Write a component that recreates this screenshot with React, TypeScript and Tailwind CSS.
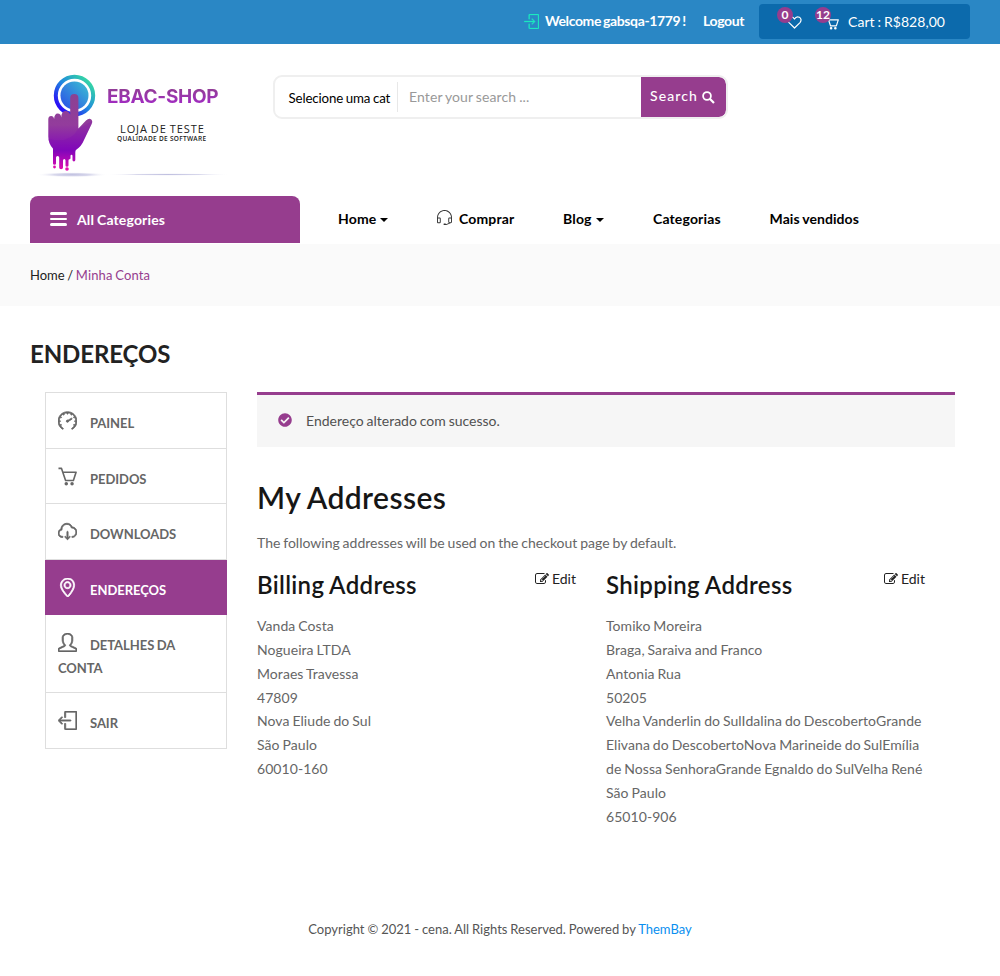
import type { ReactNode } from "react";
import { SlLogin, SlLogout, SlSpeedometer, SlCloudDownload, SlLocationPin, SlUser, SlEarphonesAlt } from "react-icons/sl";
import { FaCheckCircle } from "react-icons/fa";

function EditIcon() {
  return (
    <svg viewBox="0 0 1792 1792" className="size-[14px]" fill="currentColor">
      <path d="M888 1184l116-116-152-152-116 116v56h96v96h56zM1328 464q-16-16-33 1l-350 350q-17 17-1 33t33-1l350-350q17-17 1-33zm80 594v190q0 119-84.5 203.5t-203.5 84.5h-832q-119 0-203.5-84.5t-84.5-203.5v-832q0-119 84.5-203.5t203.5-84.5h832q63 0 117 25 15 7 18 23 3 17-9 29l-49 49q-14 14-32 8-23-6-45-6h-832q-66 0-113 47t-47 113v832q0 66 47 113t113 47h832q66 0 113-47t47-113v-126q0-13 9-22l64-64q15-15 35-7t20 29zm-96-738l288 288-672 672h-288v-288zm444 132l-92 92-288-288 92-92q28-28 68-28t68 28l152 152q28 28 28 68t-28 68z" />
    </svg>
  );
}

function CartIcon({ className }: { className?: string; strokeWidth?: string }) {
  return (
    <svg viewBox="0 0 20 20" className={className} fill="none" stroke="currentColor" strokeWidth="1.700">
      <path d="M.5 1.500h3.200L8 14.200h8.200L19 5.500H5" strokeLinejoin="round" />
      <circle cx="8.700" cy="17.600" r="1" fill="currentColor" />
      <circle cx="14.800" cy="17.600" r="1" fill="currentColor" />
    </svg>
  );
}

function HeartIcon() {
  return (
    <svg viewBox="0 0 15 13" className="h-[13px] w-[15px]" fill="none" stroke="currentColor" strokeWidth="1.200">
      <path d="M7.500 12 2 6.600C.4 4.800.7 2.300 2.600 1.300 4.500.4 6.500 1.200 7.500 3c1-1.800 3-2.600 4.900-1.700 1.900 1 2.200 3.500.6 5.300z" strokeLinejoin="round" />
    </svg>
  );
}

function SearchIcon() {
  return (
    <svg viewBox="0 0 13 13" className="size-[13px]" fill="none" stroke="currentColor" strokeWidth="1.800">
      <circle cx="5" cy="5" r="3.900" />
      <path d="m7.800 7.800 4.200 4.200" strokeWidth="2.200" />
    </svg>
  );
}

function Logo() {
  return (
    <div className="relative h-[122px] w-[202px]">
      <svg viewBox="0 0 202 122" className="h-[122px] w-[202px]">
        <defs>
          <linearGradient id="ring" x1="0" y1="1" x2="1" y2="0">
            <stop offset="0.15" stopColor="#2a10f5" />
            <stop offset="0.5" stopColor="#1f86e0" />
            <stop offset="0.9" stopColor="#35d8a4" />
          </linearGradient>
          <linearGradient id="disc" x1="0" y1="1" x2="1" y2="0">
            <stop offset="0" stopColor="#2a4be8" />
            <stop offset="1" stopColor="#3cc3d2" />
          </linearGradient>
          <linearGradient id="hand" gradientUnits="userSpaceOnUse" x1="0" y1="34" x2="0" y2="111">
            <stop offset="0" stopColor="#8b4292" />
            <stop offset="0.4" stopColor="#933c9c" />
            <stop offset="0.74" stopColor="#8206bb" />
            <stop offset="1" stopColor="#e80cae" />
          </linearGradient>
          <radialGradient id="shadow">
            <stop offset="0" stopColor="#c0c0e0" />
            <stop offset="0.5" stopColor="#d8d8ec" />
            <stop offset="1" stopColor="#ffffff" stopOpacity="0" />
          </radialGradient>
        </defs>
        <ellipse cx="42" cy="114.700" rx="36" ry="2.600" fill="url(#shadow)" />
        <ellipse cx="138" cy="114.500" rx="62" ry="1.300" fill="url(#shadow)" />
        <circle cx="44.500" cy="35.500" r="18.700" fill="#fff" stroke="url(#ring)" strokeWidth="4" />
        <circle cx="44.500" cy="35.500" r="14" fill="url(#disc)" />
        <path
          d="M40.200 38a4.100 4.100 0 0 1 8.200 0v30.500L56 60.500q2.800-2.700 5-1.300 2.200 1.600.5 5L53.500 81q-2 5-7 8.500-1.200.8-1.200 2.500v8q0 1.400-1.400 1.400T42.500 100v-4q0-1.200-1-1.200t-1 1.200v2q0 1.200-1 1.200t-1 1.200v5q0 1.300-1.500 1.300t-1.500-1.300v-5q0-1.500-1.200-1.500T33 100.500v7q0 1.800-1.900 1.800t-1.900-1.800V97.500q0-1.500-1.600-1.500T26 97.500v6q0 1.300-1.500 1.300T23 103.500V88.500q-4.700-5-4.700-12V59q.2-3 2.800-3 2.600 0 3 3 .4-5.500 3.600-5.500t3.600 4q.2-6.500 4-6.500 3.600 0 4.900 3.500z"
          fill="url(#hand)"
        />
        <circle cx="24.500" cy="107" r="1.400" fill="#dd0fb0" />
        <circle cx="37" cy="109" r="1.800" fill="#e80cae" />
        <path d="M18.400 79q22 5 29.500-10l14-8q.8 1.500-.4 3.500L53.500 81q-2 5-8 9-13 2-23-1.500-3.500-4-4.100-9.500z" fill="#7a00b5" opacity=".18" />
      </svg>
      <div className="absolute left-[77px] top-[24px] bg-linear-to-b from-[#8d4088] to-[#a816d4] bg-clip-text font-['Inter',sans-serif] text-[19px] leading-[26px] font-bold tracking-[-0.300px] whitespace-nowrap text-transparent">
        EBAC-SHOP
      </div>
      <div className="absolute left-[90px] top-[62px] font-['Open_Sans',sans-serif] text-[11px] leading-[14px] tracking-[0.900px] whitespace-nowrap text-[#222]">
        LOJA DE TESTE
      </div>
      <div className="absolute left-[87px] top-[74px] font-['Open_Sans',sans-serif] text-[6.500px] leading-[10px] font-semibold tracking-[0.300px] whitespace-nowrap text-[#222] [word-spacing:0px]">
        QUALIDADE DE SOFTWARE
      </div>
    </div>
  );
}

function Badge({ children }: { children: ReactNode }) {
  return (
    <span className="absolute -top-[9px] -left-[10px] flex size-4 items-center justify-center rounded-full bg-[#963d8e] text-[12px] leading-none font-bold">
      {children}
    </span>
  );
}

function Caret() {
  return <span className="ml-[4px] mt-[3px] border-x-4 border-t-4 border-x-transparent border-t-black" />;
}

type AddressProps = { title: string; lines: string[] };

function Address({ title, lines }: AddressProps) {
  return (
    <section className="w-[349px] pr-[30px]">
      <header className="flex justify-between">
        <h3 className="pt-[2px] text-2xl leading-[32px] font-semibold tracking-[0.330px] text-[#161616]">{title}</h3>
        <a className="flex h-6 items-center gap-[3px] text-sm text-[#222]">
          <EditIcon />
          Edit
        </a>
      </header>
      <address className="mt-[13.200px] text-sm leading-[23.800px] tracking-[0.060px] whitespace-nowrap text-[#666] not-italic">
        {lines.map((line) => (
          <div key={line}>{line}</div>
        ))}
      </address>
    </section>
  );
}

const items = [
  { label: "PAINEL", Icon: SlSpeedometer, height: "h-[56px]" },
  { label: "PEDIDOS", Icon: CartIcon, height: "h-[55px]" },
  { label: "DOWNLOADS", Icon: SlCloudDownload, height: "h-[56px]" },
  { label: "ENDEREÇOS", Icon: SlLocationPin, height: "h-[55px]", active: true },
  { label: "DETALHES DA CONTA", Icon: SlUser, height: "h-[78px]" },
  { label: "SAIR", Icon: SlLogout, height: "h-[56px]" },
];

export default function App() {
  return (
    <div className="h-[976px] w-[1000px] overflow-hidden bg-white font-['Lato',sans-serif] text-sm text-[#666] [word-spacing:-0.700px]">
      <div className="flex h-11 items-start bg-[#2a87c5] pl-[524px] text-white">
        <SlLogin className="mt-[14px] size-[15px] text-[#1de9c0]" stroke="currentColor" strokeWidth="22" />
        <span className="ml-[6px] mt-[11px] w-[158px] text-sm leading-5 font-bold tracking-[-0.380px] whitespace-nowrap [word-spacing:-1px]">
          Welcome gabsqa-1779 !
        </span>
        <span className="mt-[11px] w-[56px] leading-5 font-bold tracking-[-0.350px]">Logout</span>
        <div className="mt-1 flex h-[35px] w-[211px] items-start rounded-[4px] bg-[#0c6aac] pl-[28px]">
          <span className="relative mt-[12px] mr-[23px]">
            <HeartIcon />
            <Badge>0</Badge>
          </span>
          <span className="relative mt-[12px]">
            <CartIcon className="size-[14px]" />
            <Badge>12</Badge>
          </span>
          <span className="ml-[9px] mt-[8px] leading-5 tracking-[0.040px] whitespace-nowrap">Cart : R$828,00</span>
        </div>
      </div>

      <header className="flex h-[152px] pl-[30px]">
        <div className="mt-[16px] w-[243px]">
          <Logo />
        </div>
        <form className="mt-[31px] flex h-[44px] w-[455px] items-center overflow-hidden rounded-[9px] border-2 border-[#efefef]">
          <div className="flex h-[30px] w-[123px] items-center border-r border-[#e8e8e8] pl-[13.500px] pt-[2px] text-[13.300px] tracking-[-0.150px] whitespace-nowrap text-black [word-spacing:-0.500px]">
            Selecione uma cat
          </div>
          <div className="flex-1 pl-[11px] text-sm tracking-[0.100px] text-[#999]">Enter your search ...</div>
          <div className="flex h-[40px] w-[85px] items-center gap-[4px] rounded-r-[7px] bg-[#963d8e] pl-[9px] text-sm font-medium tracking-[1.100px] text-white">
            <span className="-mt-[2px]">Search</span>
            <SearchIcon />
          </div>
        </form>
      </header>

      <nav className="flex h-12 items-start pl-[30px] text-sm leading-[45px] font-bold tracking-[0.150px] text-black [word-spacing:-0.700px]">
        <div className="flex h-[47px] w-[270px] items-center rounded-t-[8px] bg-[#963d8e] pl-[20px] text-white">
          <span className="-mt-px flex flex-col gap-[3px]">
            <span className="h-[2.500px] w-[17px] rounded-full bg-white" />
            <span className="h-[2.500px] w-[17px] rounded-full bg-white" />
            <span className="h-[2.500px] w-[17px] rounded-full bg-white" />
          </span>
          <span className="ml-[10px] leading-5">All Categories</span>
        </div>
        <span className="ml-[38px] flex w-[99px] items-center">Home<Caret /></span>
        <span className="flex w-[126px] items-center"><SlEarphonesAlt className="mr-[7px] -mt-[2px] size-[15px] text-[#333]" />Comprar</span>
        <span className="flex w-[90px] items-center">Blog<Caret /></span>
        <span className="w-[116.500px]">Categorias</span>
        <span className="tracking-[0.080px]">Mais vendidos</span>
      </nav>

      <div className="h-[62px] bg-[#fafafa] pt-[19px] pl-[30px] text-[13px] leading-6 text-[#222]">
        Home <span>/</span> <span className="tracking-[0.120px] text-[#963d8e]">Minha Conta</span>
      </div>

      <h1 className="mt-[32px] ml-[30px] text-2xl leading-[32px] font-bold tracking-[-0.100px] text-[#222]">ENDEREÇOS</h1>

      <main className="mt-[22px] flex h-[508px] pl-[45px]">
        <ul className="h-[357px] w-[182px] border border-[#dedede]">
          {items.map(({ label, Icon, height, active }) => (
            <li
              key={label}
              className={`${height} ${active ? "-mx-px bg-[#963d8e] px-[13px] text-white" : "border-b border-[#dedede] px-[12px] last:border-b-0"} pt-[19px] text-[13px] leading-[23px] font-bold tracking-[-0.050px]`}
            >
              <Icon className="relative -top-[4px] mr-[13px] inline size-[19px]" stroke="currentColor" strokeWidth="42" />
              {label}
            </li>
          ))}
        </ul>

        <div className="ml-[30px] w-[698px]">
          <div className="flex h-[55px] items-center border-t-[3px] border-[#963d8e] bg-[#f6f6f6] pl-[21px] text-[#515151]">
            <FaCheckCircle className="-mt-[2px] size-[14px] text-[#963d8e]" />
            <span className="ml-[14px]">Endereço alterado com sucesso.</span>
          </div>
          <h2 className="mt-[30px] text-[30px] leading-10 font-semibold tracking-[0.420px] text-[#161616]">My Addresses</h2>
          <p className="mt-[14px] leading-6">The following addresses will be used on the checkout page by default.</p>
          <div className="mt-[12px] flex">
            <Address
              title="Billing Address"
              lines={["Vanda Costa", "Nogueira LTDA", "Moraes Travessa", "47809", "Nova Eliude do Sul", "São Paulo", "60010-160"]}
            />
            <Address
              title="Shipping Address"
              lines={[
                "Tomiko Moreira",
                "Braga, Saraiva and Franco",
                "Antonia Rua",
                "50205",
                "Velha Vanderlin do SulIdalina do DescobertoGrande",
                "Elivana do DescobertoNova Marineide do SulEmília",
                "de Nossa SenhoraGrande Egnaldo do SulVelha René",
                "São Paulo",
                "65010-906",
              ]}
            />
          </div>
        </div>
      </main>

      <footer className="mt-[17px] text-center text-[13px] leading-6 text-[#555] [word-spacing:-0.400px]">
        Copyright © 2021 - cena. All Rights Reserved. Powered by <a className="text-[#0a8ff0]">ThemBay</a>
      </footer>
    </div>
  );
}
